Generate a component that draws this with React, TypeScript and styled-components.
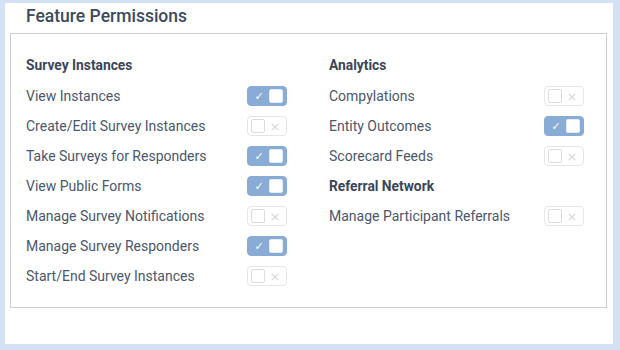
import styled, { createGlobalStyle } from 'styled-components';

type Permission = { label: string; enabled: boolean };
type PermissionGroup = { title: string; items: Permission[] };

const leftGroups: PermissionGroup[] = [
  {
    title: 'Survey Instances',
    items: [
      { label: 'View Instances', enabled: true },
      { label: 'Create/Edit Survey Instances', enabled: false },
      { label: 'Take Surveys for Responders', enabled: true },
      { label: 'View Public Forms', enabled: true },
      { label: 'Manage Survey Notifications', enabled: false },
      { label: 'Manage Survey Responders', enabled: true },
      { label: 'Start/End Survey Instances', enabled: false },
    ],
  },
];

const rightGroups: PermissionGroup[] = [
  {
    title: 'Analytics',
    items: [
      { label: 'Compylations', enabled: false },
      { label: 'Entity Outcomes', enabled: true },
      { label: 'Scorecard Feeds', enabled: false },
    ],
  },
  {
    title: 'Referral Network',
    items: [{ label: 'Manage Participant Referrals', enabled: false }],
  },
];

export default function App() {
  return (
    <>
      <GlobalStyle />
      <Page>
        <Card>
          <Title>Feature Permissions</Title>
          <PermissionBox>
            <PermissionColumn groups={leftGroups} />
            <PermissionColumn groups={rightGroups} />
          </PermissionBox>
        </Card>
      </Page>
    </>
  );
}

function PermissionColumn({ groups }: { groups: PermissionGroup[] }) {
  return (
    <Column>
      {groups.map((group, i) => (
        <div key={group.title}>
          <GroupHeader $first={i === 0}>{group.title}</GroupHeader>
          {group.items.map((item) => (
            <Row key={item.label}>
              <Label>{item.label}</Label>
              <Toggle enabled={item.enabled} />
            </Row>
          ))}
        </div>
      ))}
    </Column>
  );
}

function Toggle({ enabled }: { enabled: boolean }) {
  return (
    <Switch $on={enabled}>
      {enabled ? (
        <>
          <Mark $on>✓</Mark>
          <Knob $on />
        </>
      ) : (
        <>
          <Knob $on={false} />
          <Mark $on={false}>×</Mark>
        </>
      )}
    </Switch>
  );
}

const GlobalStyle = createGlobalStyle`
  html, body {
    margin: 0;
    padding: 0;
    background: #d4e1f5;
  }
  body {
    font-family: Roboto, "Liberation Sans", sans-serif;
  }
`;

const Page = styled.div`
  width: 620px;
  height: 350px;
  box-sizing: border-box;
  padding: 3px 7px 6px 5px;
  background: #d4e1f5;
`;

const Card = styled.div`
  height: 100%;
  background: #fff;
  padding: 2px 6px 0 5px;
  box-sizing: border-box;
`;

const Title = styled.h2`
  margin: 0 0 6px 16px;
  font-size: 17.5px;
  line-height: 22px;
  font-weight: 500;
  color: #3b4a60;
`;

const PermissionBox = styled.div`
  border: 1px solid #cfcfcf;
  height: 275px;
  box-sizing: border-box;
  padding: 16px 0 16px 15px;
  display: grid;
  grid-template-columns: 261px 255px;
  column-gap: 42px;
  align-items: start;
`;

const Column = styled.div`
  display: flex;
  flex-direction: column;
`;

const GroupHeader = styled.div<{ $first: boolean }>`
  height: 30px;
  margin-bottom: ${(p) => (p.$first ? '1px' : '0')};
  display: flex;
  align-items: center;
  font-size: 13.8px;
  font-weight: 700;
  color: #3a4659;
`;

const Row = styled.div`
  height: 30px;
  display: flex;
  align-items: center;
  justify-content: space-between;
`;

const Label = styled.span`
  font-size: 14px;
  color: #4a576c;
`;

const Switch = styled.span<{ $on: boolean }>`
  width: 40px;
  height: 20px;
  box-sizing: border-box;
  border-radius: 4px;
  display: flex;
  align-items: center;
  justify-content: space-between;
  padding: 0 3px;
  background: ${(p) => (p.$on ? '#89acd6' : '#fff')};
  border: 1px solid ${(p) => (p.$on ? '#89acd6' : '#e6e6e6')};
`;

const Knob = styled.span<{ $on: boolean }>`
  width: 14px;
  height: 14px;
  box-sizing: border-box;
  border-radius: 2px;
  background: #fff;
  border: 1px solid ${(p) => (p.$on ? '#e4ecf6' : '#dcdcdc')};
`;

const Mark = styled.span<{ $on: boolean }>`
  width: 16px;
  text-align: center;
  font-size: ${(p) => (p.$on ? '11px' : '13px')};
  font-weight: ${(p) => (p.$on ? 700 : 400)};
  line-height: 1;
  font-family: "DejaVu Sans", sans-serif;
  color: ${(p) => (p.$on ? '#fff' : '#d6d6d6')};
`;
